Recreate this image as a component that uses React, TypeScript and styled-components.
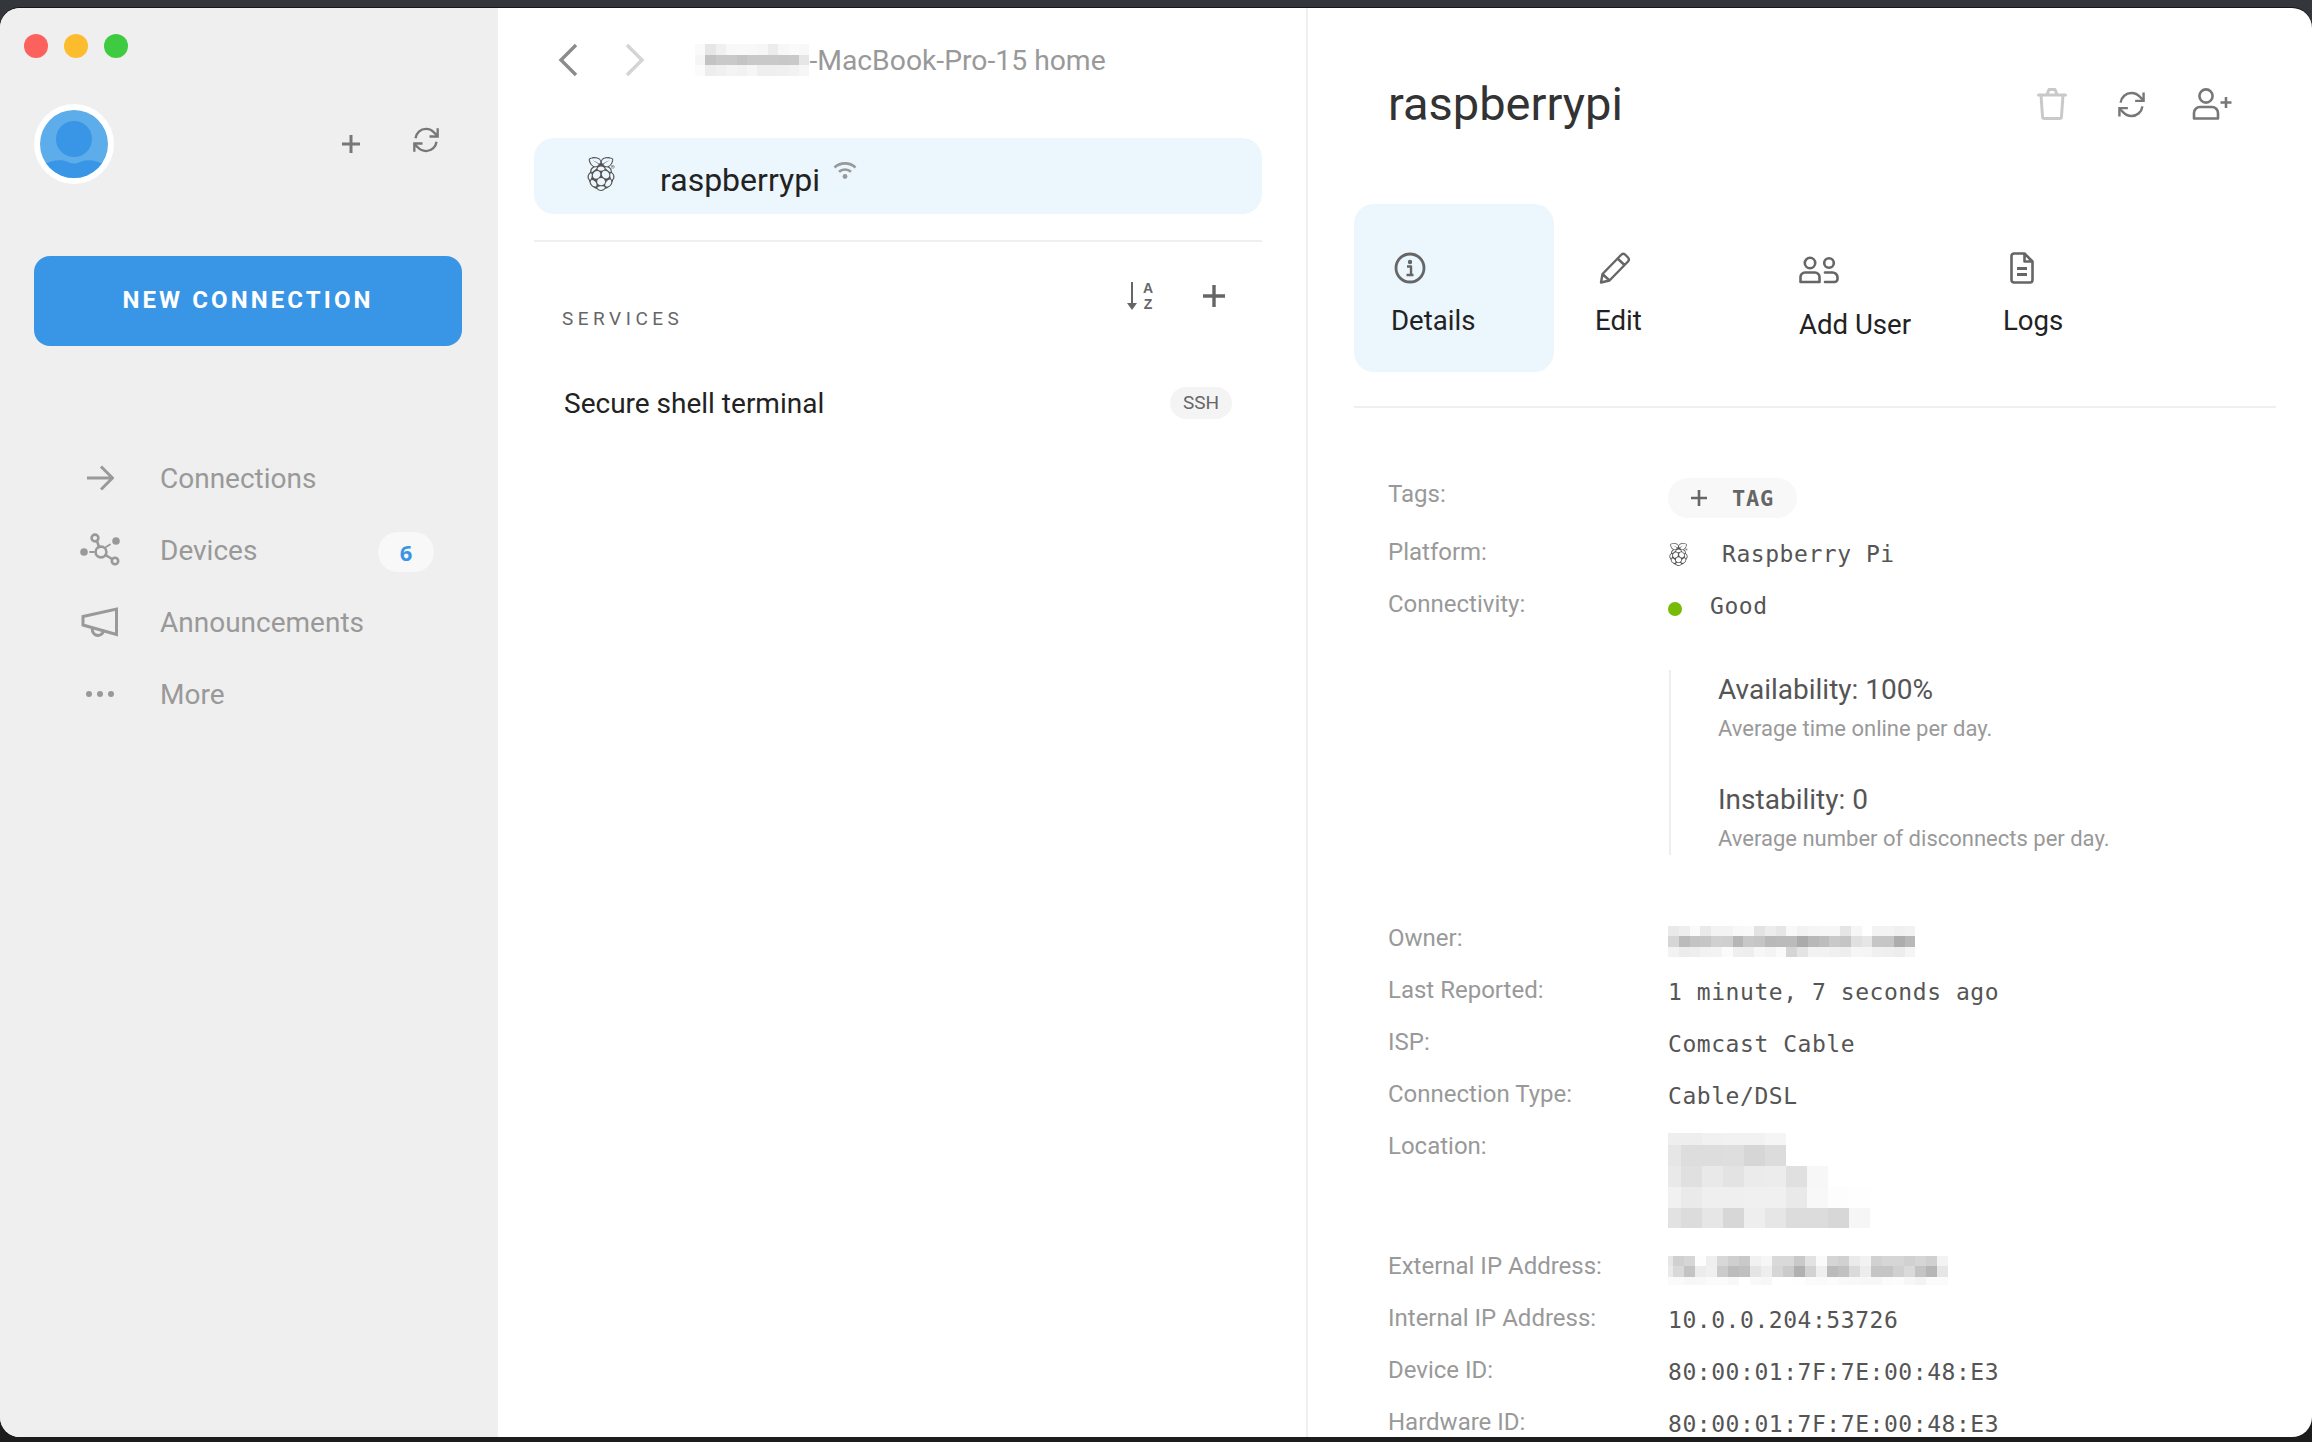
import React from 'react';
import styled, { createGlobalStyle } from 'styled-components';
import { SiRaspberrypi } from 'react-icons/si';

const GlobalStyle = createGlobalStyle`
  html, body {
    margin: 0;
    padding: 0;
    height: 100%;
    background: #1c1c1c;
  }
  * {
    box-sizing: border-box;
  }
`;

const Page = styled.div`
  height: 1442px;
  overflow: hidden;
  padding: 8px 0 5px;
  background: linear-gradient(#33363a 0, #33363a 50%, #1c1c1c 50%);
  font-family: Roboto, 'Liberation Sans', sans-serif;
`;

const Window = styled.div`
  display: flex;
  height: 100%;
  overflow: hidden;
  border-radius: 20px;
  background: #fff;
  box-shadow: 0 -1px 0 #15171a;
`;

/* left column */
const Sidebar = styled.aside`
  flex: 0 0 498px;
  padding-top: 26px;
  background: #efefef;
`;

const Lights = styled.div`
  display: flex;
  gap: 16px;
  padding-left: 24px;
`;

const Light = styled.span<{ $color: string }>`
  width: 24px;
  height: 24px;
  border-radius: 50%;
  background: ${(p) => p.$color};
`;

const Profile = styled.div`
  display: flex;
  align-items: center;
  margin-top: 46px;
  padding: 0 58px 0 34px;
`;

const Avatar = styled.svg`
  display: block;
  width: 80px;
  height: 80px;
`;

const ProfileActions = styled.div`
  display: flex;
  align-items: center;
  gap: 51px;
  margin-left: auto;
  color: #777;
`;

const SyncWrap = styled.div`
  display: flex;
  margin-bottom: 8px;
`;

const NewConnection = styled.button`
  display: block;
  width: 428px;
  height: 90px;
  margin: 72px 0 0 34px;
  border: 0;
  border-radius: 16px;
  background: #3996e6;
  color: #fff;
  font-family: inherit;
  font-size: 24px;
  font-weight: 700;
  letter-spacing: 3.1px;
  line-height: 88px;
  padding: 0 0 2px;
`;

const Nav = styled.nav`
  margin-top: 96px;
  padding: 0 64px 0 72px;
`;

const NavRow = styled.div`
  display: flex;
  align-items: center;
  height: 72px;
  color: #999;
  font-size: 28px;
`;

const NavIcon = styled.span`
  display: flex;
  flex: 0 0 56px;
  justify-content: center;
  margin-right: 32px;
`;

const Badge = styled.span`
  width: 56px;
  height: 40px;
  margin: 4px 0 0 auto;
  border-radius: 20px;
  background: #f8f8f8;
  color: #3996e6;
  font-family: 'Open Sans', sans-serif;
  font-size: 22px;
  font-weight: 700;
  line-height: 40px;
  text-align: center;
`;

/* middle column */
const ListPane = styled.section`
  flex: 0 0 810px;
  padding: 0 44px 0 36px;
  border-right: 2px solid #f0f0f0;
`;

const Breadcrumb = styled.header`
  display: flex;
  align-items: center;
  height: 44px;
  margin: 30px 0 56px;
  padding-left: 24px;
  color: #999;
  font-size: 28.3px;
`;

const ForwardSlot = styled.span`
  display: flex;
  margin: 0 50px 0 47px;
`;

const DeviceRow = styled.div`
  display: flex;
  align-items: center;
  height: 76px;
  padding-left: 50px;
  border-radius: 20px;
  background: #ebf6fd;
  color: #222;
  font-size: 32px;
`;

const RowIcon = styled.span`
  display: flex;
  margin: 0 42px 4px 0;
  color: #555;
`;

const DeviceTitle = styled.span`
  padding-top: 8px;
`;

const WifiSlot = styled.span`
  display: flex;
  margin: 0 0 12px 13px;
  color: #999;
`;

const Rule = styled.hr`
  height: 2px;
  margin: 26px 0 0;
  border: 0;
  background: #efefef;
`;

const ServicesHead = styled.div`
  display: flex;
  align-items: flex-start;
  padding: 40px 36px 0 28px;
  color: #666;
`;

const ServicesLabel = styled.span`
  margin: 27px auto 0 0;
  font-size: 19px;
  line-height: 20px;
  letter-spacing: 4.5px;
`;

const SortGlyph = styled.span`
  display: flex;
  width: 28px;
  height: 28px;
`;

const SortLetters = styled.span`
  display: flex;
  flex-direction: column;
  align-items: center;
  width: 14px;
  margin: -2px 0 0 2px;
  font-family: 'Liberation Sans', sans-serif;
  font-size: 14px;
  font-weight: 700;
  line-height: 16.2px;
`;

const PlusSlot = styled.span`
  display: flex;
  margin: 2px 0 0 47px;
`;

const ServiceRow = styled.div`
  display: flex;
  align-items: center;
  justify-content: space-between;
  height: 60px;
  margin-top: 44px;
  padding: 0 30px;
  color: #222;
  font-size: 28px;
`;

const ServiceTag = styled.span`
  width: 62px;
  height: 32px;
  border-radius: 16px;
  background: #f4f4f4;
  color: #666;
  font-size: 19px;
  line-height: 32px;
  text-align: center;
`;

/* right column */
const DetailPane = styled.section`
  flex: 1;
  min-width: 0;
  padding: 0 36px 0 46px;
`;

const DetailHead = styled.header`
  display: flex;
  align-items: center;
  height: 60px;
  margin-top: 67px;
  padding: 0 43px 0 34px;
`;

const DeviceName = styled.h1`
  margin: 0 auto 4px 0;
  color: #333;
  font-size: 47px;
  font-weight: 400;
`;

const HeadAction = styled.span<{ $gap: number }>`
  display: flex;
  margin: 0 0 2px ${(p) => p.$gap}px;
  color: #777;
`;

const Tabs = styled.div`
  display: flex;
  gap: 4px;
  margin-top: 69px;
`;

const Tab = styled.div<{ $active?: boolean }>`
  width: 200px;
  height: 168px;
  padding: 48px 0 0 37px;
  border-radius: 20px;
  background: ${(p) => (p.$active ? '#ebf6fd' : 'transparent')};
  color: #222;
  font-size: 27.6px;
`;

const TabIcon = styled.div<{ $shift: number; $height: number }>`
  display: flex;
  align-items: center;
  height: ${(p) => p.$height}px;
  margin: 0 0 21px ${(p) => p.$shift}px;
  color: #666;
`;

const TabLabel = styled.div`
  line-height: 32px;
`;

const TabsRule = styled.hr`
  height: 2px;
  margin: 34px 0 0;
  border: 0;
  background: #efefef;
`;

const Fields = styled.div`
  margin-top: 60px;
  padding-left: 34px;
`;

const Field = styled.div`
  display: flex;
  align-items: flex-start;
`;

const FieldLabel = styled.div`
  flex: 0 0 280px;
  color: #999;
  font-size: 24px;
  line-height: 52px;
`;

const FieldValue = styled.div`
  display: flex;
  align-items: center;
  height: 52px;
  padding-top: 4px;
  color: #555;
  font-family: 'DejaVu Sans Mono', monospace;
  font-size: 23px;
  letter-spacing: 0.55px;
  white-space: nowrap;
`;

const TagChip = styled.div`
  display: flex;
  align-items: center;
  width: 129px;
  height: 40px;
  margin: 10px 0 8px;
  padding-left: 22px;
  border-radius: 20px;
  background: #f8f8f8;
  color: #666;
  font-family: 'DejaVu Sans Mono', monospace;
  font-size: 22px;
  font-weight: 700;
  letter-spacing: 0.8px;
`;

const TagText = styled.span`
  margin-left: 24px;
`;

const PlatformIcon = styled.span`
  display: flex;
  margin: 0 32px 0 -1px;
  color: #555;
`;

const Dot = styled.span`
  width: 14px;
  height: 14px;
  margin: 6px 28px 0 0;
  border-radius: 50%;
  background: #75bb08;
`;

const Stats = styled.div`
  height: 185px;
  margin: 40px 0 57px 281px;
  padding-left: 47px;
  border-left: 2px solid #eee;
`;

const StatTitle = styled.div<{ $gap?: number }>`
  margin-top: ${(p) => p.$gap || 0}px;
  color: #555;
  font-size: 28px;
  line-height: 40px;
`;

const StatNote = styled.div`
  color: #999;
  font-size: 22px;
  line-height: 38px;
`;

const MosaicBox = styled.svg<{ $top: number; $bottom: number }>`
  display: block;
  flex: none;
  margin: ${(p) => p.$top}px 0 ${(p) => p.$bottom}px;
`;

type MosaicProps = {
  rows: string[];
  heights: number[];
  cell: number;
  first?: number;
  top?: number;
  bottom?: number;
};

// pixelated redaction blocks, each row is a list of grey levels
const Mosaic = ({ rows, heights, cell, first = cell, top = 0, bottom = 0 }: MosaicProps) => {
  const grid = rows.map((r) => r.split(' '));
  const cols = Math.max(...grid.map((g) => g.length));
  const width = first + (cols - 1) * cell;
  const height = heights.reduce((a, b) => a + b, 0);
  let y = 0;
  return (
    <MosaicBox $top={top} $bottom={bottom} width={width} height={height} shapeRendering="crispEdges">
      {grid.map((g, r) => {
        const rowY = y;
        y += heights[r];
        return g.map((c, i) => (
          <rect
            key={`${r}-${i}`}
            x={i === 0 ? 0 : first + (i - 1) * cell}
            y={rowY}
            width={i === 0 ? first : cell}
            height={heights[r]}
            fill={`#${c}${c}${c}`}
          />
        ));
      })}
    </MosaicBox>
  );
};

const line = { fill: 'none', stroke: 'currentColor', strokeLinecap: 'round', strokeLinejoin: 'round' } as const;

const PlusIcon = ({ size, weight }: { size: number; weight: number }) => (
  <svg width={size} height={size} viewBox={`0 0 ${size} ${size}`} style={{ display: 'block' }}>
    <path d={`M${size / 2} 1V${size - 1}M1 ${size / 2}H${size - 1}`} {...line} strokeWidth={weight} strokeLinecap="butt" />
  </svg>
);

const SyncIcon = ({ size }: { size: number }) => (
  <svg width={size} height={size} viewBox="0 0 24 24" style={{ display: 'block' }}>
    <g {...line} strokeWidth={2} strokeLinecap="butt" strokeLinejoin="miter">
      <path d="M3 10.5a9 9 0 0 1 9-8 9.5 9.5 0 0 1 7 3.2L22 8.5" />
      <path d="M22 2v7h-7" />
      <path d="M21 13.5a9 9 0 0 1-9 8 9.5 9.5 0 0 1-7-3.2L2 15.5" />
      <path d="M2 22v-7h7" />
    </g>
  </svg>
);

const SortArrow = () => (
  <svg width="12" height="28" viewBox="0 0 12 28" style={{ display: 'block' }}>
    <path d="M5 0V22" fill="none" stroke="currentColor" strokeWidth={2} />
    <path d="M0 21H10L5 28Z" fill="currentColor" />
  </svg>
);

const ArrowIcon = () => (
  <svg width="28" height="26" viewBox="0 0 28 26">
    <path d="M1 13H26M15 1.5L26.5 13L15 24.5" {...line} stroke="#999" strokeWidth={3} strokeLinecap="butt" />
  </svg>
);

const NetworkIcon = () => (
  <svg width="40" height="34" viewBox="0 0 40 34">
    <g {...line} stroke="#999" strokeWidth={2.6}>
      <circle cx="15" cy="5" r="3.4" />
      <circle cx="21" cy="19" r="5.4" />
      <circle cx="35" cy="28" r="3.2" />
      <path d="M17 8L19 14M25.5 22L32 26" />
      <path d="M10 19H14M26 14L30 11.5" strokeWidth={1.8} />
    </g>
    <circle cx="4" cy="19" r="3.8" fill="#999" />
    <circle cx="36" cy="8" r="3.8" fill="#999" />
  </svg>
);

const MegaphoneIcon = () => (
  <svg width="38" height="30" viewBox="0 0 38 30">
    <path d="M2 9.5L35.5 2V27.5L2 18Z" {...line} stroke="#999" strokeWidth={3} strokeLinejoin="miter" />
    <path d="M11.5 21.5a5.6 5.6 0 0 0 11 2.5" {...line} stroke="#999" strokeWidth={3} />
  </svg>
);

const DotsIcon = () => (
  <svg width="28" height="8" viewBox="0 0 28 8">
    <circle cx="3" cy="4" r="3" fill="#999" />
    <circle cx="14" cy="4" r="3" fill="#999" />
    <circle cx="25" cy="4" r="3" fill="#999" />
  </svg>
);

const Chevron = ({ back, color }: { back?: boolean; color: string }) => (
  <svg width="20" height="34" viewBox="0 0 20 34" style={{ display: 'block' }}>
    <path d={back ? 'M18 2L3 17L18 32' : 'M2 2L17 17L2 32'} fill="none" stroke={color} strokeWidth={3.4} />
  </svg>
);

const WifiIcon = () => (
  <svg width="24" height="18" viewBox="0 0 24 18" style={{ display: 'block' }}>
    <path d="M1.5 6.5a15.5 15.5 0 0 1 21 0M6 10.8a9 9 0 0 1 12 0" {...line} strokeWidth={2.6} strokeLinecap="butt" />
    <circle cx="12" cy="15.5" r="2.4" fill="currentColor" />
  </svg>
);

const TrashIcon = () => (
  <svg width="30" height="32" viewBox="0 0 30 32" style={{ display: 'block' }}>
    <path d="M1.5 7H28.5M10 6.5L12 1.5H18L20 6.5M4 7L5.5 28.5a2 2 0 0 0 2 2H22.500a2 2 0 0 0 2-2L26 7" {...line} stroke="#c9c9c9" strokeWidth={3} />
  </svg>
);

const UserPlusIcon = () => (
  <svg width="41" height="32" viewBox="0 0 41 32" style={{ display: 'block' }}>
    <g {...line} strokeWidth={2.6}>
      <circle cx="14" cy="8" r="6.6" />
      <path d="M2 30.500V25a6 6 0 0 1 6-6H20a6 6 0 0 1 6 6V30.500Z" />
      <path d="M34 9V20M28.500 14.500H39.500" strokeLinecap="butt" />
    </g>
  </svg>
);

const InfoIcon = () => (
  <svg width="32" height="32" viewBox="0 0 32 32" style={{ display: 'block' }}>
    <circle cx="16" cy="16" r="14" {...line} strokeWidth={2.8} />
    <circle cx="16" cy="10" r="2.2" fill="currentColor" />
    <path d="M13 14.500H17V22M12.500 23H19.500" {...line} strokeWidth={2.4} strokeLinecap="butt" />
  </svg>
);

const PenIcon = () => (
  <svg width="32" height="32" viewBox="0 0 32 32" style={{ display: 'block' }}>
    <path d="M2 30.500L3.500 22L22 3A3 3 0 0 1 26 2.500L29 5.500A3 3 0 0 1 29 9.500L10.500 28.500ZM3.500 22L10.500 28.500M18.500 6.500L25.500 13" {...line} strokeWidth={2.4} />
  </svg>
);

const UsersIcon = () => (
  <svg width="40" height="28" viewBox="0 0 40 28" style={{ display: 'block' }}>
    <g {...line} strokeWidth={2.6}>
      <circle cx="11" cy="7" r="5.200" />
      <path d="M1.500 26V21a4.500 4.500 0 0 1 4.500-4.500H16A4.500 4.500 0 0 1 20.500 21V26Z" />
      <circle cx="30" cy="7" r="4.800" />
      <path d="M26 16.500H33A5 5 0 0 1 38.500 21.500V23A3 3 0 0 1 35.500 26H26" />
    </g>
  </svg>
);

const FileIcon = () => (
  <svg width="24" height="32" viewBox="0 0 24 32" style={{ display: 'block' }}>
    <path d="M1.500 4A2.500 2.500 0 0 1 4 1.500H14.500L22.500 9.500V28A2.500 2.500 0 0 1 20 30.500H4A2.500 2.500 0 0 1 1.500 28ZM14.500 1.500V9.500H22.500" {...line} strokeWidth={2.6} />
    <path d="M7 16.500H17M7 22.500H17" {...line} strokeWidth={3} strokeLinecap="butt" />
  </svg>
);

const AvatarIcon = () => (
  <Avatar viewBox="0 0 80 80">
    <defs>
      <clipPath id="avatar-clip">
        <circle cx="40" cy="40" r="34" />
      </clipPath>
    </defs>
    <circle cx="40" cy="40" r="40" fill="#fff" />
    <circle cx="40" cy="40" r="34" fill="#5cade9" />
    <g clipPath="url(#avatar-clip)">
      <circle cx="40" cy="35" r="18" fill="#3996e6" />
      <path d="M8 62C16 56 28 55 34 58C38 60 42 60 46 58C52 55 64 56 72 62V80H8Z" fill="#3996e6" />
    </g>
  </Avatar>
);

const monoRows: [string, string][] = [
  ['Internal IP Address:', '10.0.0.204:53726'],
  ['Device ID:', '80:00:01:7F:7E:00:48:E3'],
  ['Hardware ID:', '80:00:01:7F:7E:00:48:E3'],
];

const App: React.FC = () => {
  return (
    <Page>
      <GlobalStyle />
      <Window>
        <Sidebar>
          <Lights>
            <Light $color="#fc615d" />
            <Light $color="#fdbc2e" />
            <Light $color="#3ecb42" />
          </Lights>
          <Profile>
            <AvatarIcon />
            <ProfileActions>
              <PlusIcon size={20} weight={3} />
              <SyncWrap>
                <SyncIcon size={28} />
              </SyncWrap>
            </ProfileActions>
          </Profile>
          <NewConnection>NEW CONNECTION</NewConnection>
          <Nav>
            <NavRow>
              <NavIcon><ArrowIcon /></NavIcon>
              Connections
            </NavRow>
            <NavRow>
              <NavIcon><NetworkIcon /></NavIcon>
              Devices
              <Badge>6</Badge>
            </NavRow>
            <NavRow>
              <NavIcon><MegaphoneIcon /></NavIcon>
              Announcements
            </NavRow>
            <NavRow>
              <NavIcon><DotsIcon /></NavIcon>
              More
            </NavRow>
          </Nav>
        </Sidebar>

        <ListPane>
          <Breadcrumb>
            <Chevron back color="#8c8c8c" />
            <ForwardSlot>
              <Chevron color="#d4d4d4" />
            </ForwardSlot>
            <Mosaic
              cell={10.4}
              heights={[11, 10, 11]}
              rows={[
                'fa e6 f0 f8 f9 f8 f6 ec f7 fa f8',
                'f5 c3 c9 c9 c4 c9 c9 c9 c8 c9 e6',
                'fb ed f0 f4 f2 f6 ef ef f0 f2 f6',
              ]}
            />
            -MacBook-Pro-15 home
          </Breadcrumb>
          <DeviceRow>
            <RowIcon><SiRaspberrypi size={34} /></RowIcon>
            <DeviceTitle>raspberrypi</DeviceTitle>
            <WifiSlot><WifiIcon /></WifiSlot>
          </DeviceRow>
          <Rule />
          <ServicesHead>
            <ServicesLabel>SERVICES</ServicesLabel>
            <SortGlyph>
              <SortArrow />
              <SortLetters>
                <span>A</span>
                <span>Z</span>
              </SortLetters>
            </SortGlyph>
            <PlusSlot><PlusIcon size={24} weight={3.4} /></PlusSlot>
          </ServicesHead>
          <ServiceRow>
            Secure shell terminal
            <ServiceTag>SSH</ServiceTag>
          </ServiceRow>
        </ListPane>

        <DetailPane>
          <DetailHead>
            <DeviceName>raspberrypi</DeviceName>
            <HeadAction $gap={0}><TrashIcon /></HeadAction>
            <HeadAction $gap={50}><SyncIcon size={29} /></HeadAction>
            <HeadAction $gap={46}><UserPlusIcon /></HeadAction>
          </DetailHead>
          <Tabs>
            <Tab $active>
              <TabIcon $shift={3} $height={32}><InfoIcon /></TabIcon>
              <TabLabel>Details</TabLabel>
            </Tab>
            <Tab>
              <TabIcon $shift={4} $height={32}><PenIcon /></TabIcon>
              <TabLabel>Edit</TabLabel>
            </Tab>
            <Tab>
              <TabIcon $shift={0} $height={36}><UsersIcon /></TabIcon>
              <TabLabel>Add User</TabLabel>
            </Tab>
            <Tab>
              <TabIcon $shift={7} $height={32}><FileIcon /></TabIcon>
              <TabLabel>Logs</TabLabel>
            </Tab>
          </Tabs>
          <TabsRule />
          <Fields>
            <Field>
              <FieldLabel>Tags:</FieldLabel>
              <TagChip>
                <PlusIcon size={18} weight={2.6} />
                <TagText>TAG</TagText>
              </TagChip>
            </Field>
            <Field>
              <FieldLabel>Platform:</FieldLabel>
              <FieldValue>
                <PlatformIcon><SiRaspberrypi size={23} /></PlatformIcon>
                Raspberry Pi
              </FieldValue>
            </Field>
            <Field>
              <FieldLabel>Connectivity:</FieldLabel>
              <FieldValue>
                <Dot />
                Good
              </FieldValue>
            </Field>
            <Stats>
              <StatTitle>Availability: 100%</StatTitle>
              <StatNote>Average time online per day.</StatNote>
              <StatTitle $gap={32}>Instability: 0</StatTitle>
              <StatNote>Average number of disconnects per day.</StatNote>
            </Stats>
            <Field>
              <FieldLabel>Owner:</FieldLabel>
              <Mosaic
                top={14}
                cell={10.75}
                heights={[10, 11, 10]}
                rows={[
                  'e9 ee fa ea f3 f3 f8 f9 e3 ec e6 f8 f2 f5 f6 f6 e5 f6 ff f3 f3 f0 f2',
                  'd6 bb c4 c6 d0 cf b6 c8 c5 b9 bb bb ab b8 bd c9 c5 e0 e6 c6 c6 ad b8',
                  'f2 ec ee f2 f3 fb ef ee f7 f4 fa d5 e4 f2 f2 f0 ee f6 f5 f0 ef ed f5',
                ]}
              />
            </Field>
            <Field>
              <FieldLabel>Last Reported:</FieldLabel>
              <FieldValue>1 minute, 7 seconds ago</FieldValue>
            </Field>
            <Field>
              <FieldLabel>ISP:</FieldLabel>
              <FieldValue>Comcast Cable</FieldValue>
            </Field>
            <Field>
              <FieldLabel>Connection Type:</FieldLabel>
              <FieldValue>Cable/DSL</FieldValue>
            </Field>
            <Field>
              <FieldLabel>Location:</FieldLabel>
              <Mosaic
                top={13}
                bottom={12}
                cell={21}
                first={13}
                heights={[12, 21, 21, 21, 20]}
                rows={[
                  'ee ee f1 f2 f2 f5 ff ff ff ff',
                  'e6 dd dd de d6 dc ff ff ff ff',
                  'e9 e0 e9 e3 eb ec e0 f7 ff ff',
                  'f1 ea ef ef f0 f0 e9 f8 fd fe',
                  'e2 dc e6 d7 ee e6 dc dc d7 f6',
                ]}
              />
            </Field>
            <Field>
              <FieldLabel>External IP Address:</FieldLabel>
              <Mosaic
                top={16}
                cell={11}
                first={5}
                heights={[10, 11, 8]}
                rows={[
                  'e6 d0 d6 fd ef d8 cf c9 f1 f6 d9 d9 c9 e2 fa d5 d1 ea f2 d1 d6 d6 d1 d6 d0 f3',
                  'ea d9 c4 ec f0 cb bc c0 e4 ee d6 cb b1 d2 ef bb c1 da ec c5 c5 d0 da c4 b6 e6',
                  'fb fa f7 f8 fb fb f8 ff f9 f7 ff ff fe fb fa fc f9 f8 f7 f7 fb fc f7 f3 fb fb',
                ]}
              />
            </Field>
            {monoRows.map(([label, value]) => (
              <Field key={label}>
                <FieldLabel>{label}</FieldLabel>
                <FieldValue>{value}</FieldValue>
              </Field>
            ))}
          </Fields>
        </DetailPane>
      </Window>
    </Page>
  );
};

export default App;
